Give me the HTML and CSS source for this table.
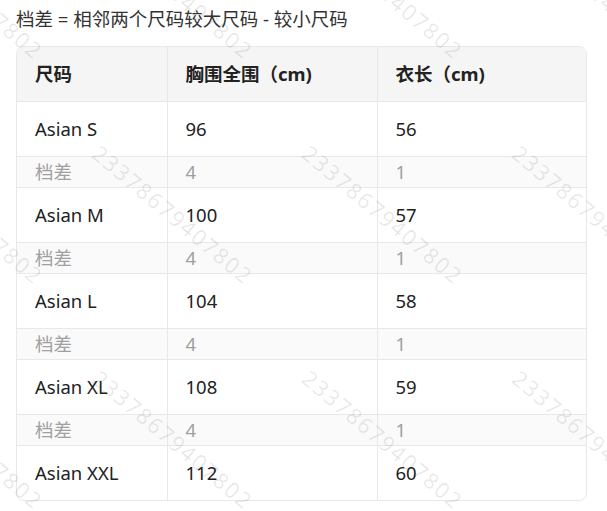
FILE: index.html
```html
<!DOCTYPE html>
<html lang="zh-CN">
<head>
<meta charset="utf-8">
<title>尺码表</title>
<link rel="stylesheet" href="styles.css">
</head>
<body>
<div class="page">
  <p class="note">档差 = 相邻两个尺码较大尺码 - 较小尺码</p>
  <div class="table-wrap">
    <table class="size-table">
      <colgroup>
        <col class="c1"><col class="c2"><col class="c3">
      </colgroup>
      <thead>
        <tr><th>尺码</th><th>胸围全围（cm)</th><th>衣长（cm)</th></tr>
      </thead>
      <tbody>
        <tr class="size"><td>Asian S</td><td>96</td><td>56</td></tr>
        <tr class="diff"><td>档差</td><td>4</td><td>1</td></tr>
        <tr class="size"><td>Asian M</td><td>100</td><td>57</td></tr>
        <tr class="diff"><td>档差</td><td>4</td><td>1</td></tr>
        <tr class="size"><td>Asian L</td><td>104</td><td>58</td></tr>
        <tr class="diff"><td>档差</td><td>4</td><td>1</td></tr>
        <tr class="size"><td>Asian XL</td><td>108</td><td>59</td></tr>
        <tr class="diff"><td>档差</td><td>4</td><td>1</td></tr>
        <tr class="size last"><td>Asian XXL</td><td>112</td><td>60</td></tr>
      </tbody>
    </table>
  </div>
</div>
<div class="watermark" aria-hidden="true">
  <span class="wm" style="left:-107px;top:-84px">23378679407802</span>
  <span class="wm" style="left:103px;top:-84px">23378679407802</span>
  <span class="wm" style="left:313px;top:-84px">23378679407802</span>
  <span class="wm" style="left:523px;top:-84px">23378679407802</span>
  <span class="wm" style="left:-107px;top:141px">23378679407802</span>
  <span class="wm" style="left:103px;top:141px">23378679407802</span>
  <span class="wm" style="left:313px;top:141px">23378679407802</span>
  <span class="wm" style="left:523px;top:141px">23378679407802</span>
  <span class="wm" style="left:-107px;top:366px">23378679407802</span>
  <span class="wm" style="left:103px;top:366px">23378679407802</span>
  <span class="wm" style="left:313px;top:366px">23378679407802</span>
  <span class="wm" style="left:523px;top:366px">23378679407802</span>
</div>
</body>
</html>
```
FILE: styles.css
```css
html, body {
  margin: 0;
  padding: 0;
  background: #fff;
}
body {
  position: relative;
  width: 607px;
  height: 511px;
  overflow: hidden;
  font-family: "Noto Sans", "Noto Sans CJK SC", sans-serif;
  color: #333;
}
.page {
  padding: 6px 20px 0 16px;
}
.note {
  margin: 0;
  font-size: 18.5px;
  line-height: 26px;
  color: #333;
}
.table-wrap {
  margin-top: 14px;
  width: 571px;
  border: 1px solid #e8e8e8;
  border-radius: 8px;
  overflow: hidden;
  box-sizing: border-box;
}
.size-table {
  width: 100%;
  border-collapse: collapse;
  table-layout: fixed;
  font-size: 18.5px;
}
.c1 { width: 150px; }
.c2 { width: 210px; }
.c3 { width: 209px; }
.size-table th,
.size-table td {
  text-align: left;
  padding: 0 0 0 18px;
  border-right: 1px solid #e8e8e8;
  border-bottom: 1px solid #e8e8e8;
  line-height: 24px;
}
.size-table th:last-child,
.size-table td:last-child {
  border-right: none;
}
.size-table th {
  background: #f5f5f5;
  font-weight: 700;
  height: 54px;
  color: #222;
}
.size td {
  height: 54px;
  color: #222;
}
.diff td {
  height: 30px;
  background: #fafafa;
  color: #a0a0a0;
}
.last td {
  border-bottom: none;
}
.watermark {
  position: absolute;
  inset: 0;
  pointer-events: none;
  overflow: hidden;
}
.wm {
  position: absolute;
  transform-origin: 0 0;
  transform: rotate(40deg);
  font-family: "Noto Sans", sans-serif;
  font-size: 22px;
  letter-spacing: 1.8px;
  line-height: 1;
  color: rgba(0, 0, 0, 0.09);
  white-space: nowrap;
}
```
